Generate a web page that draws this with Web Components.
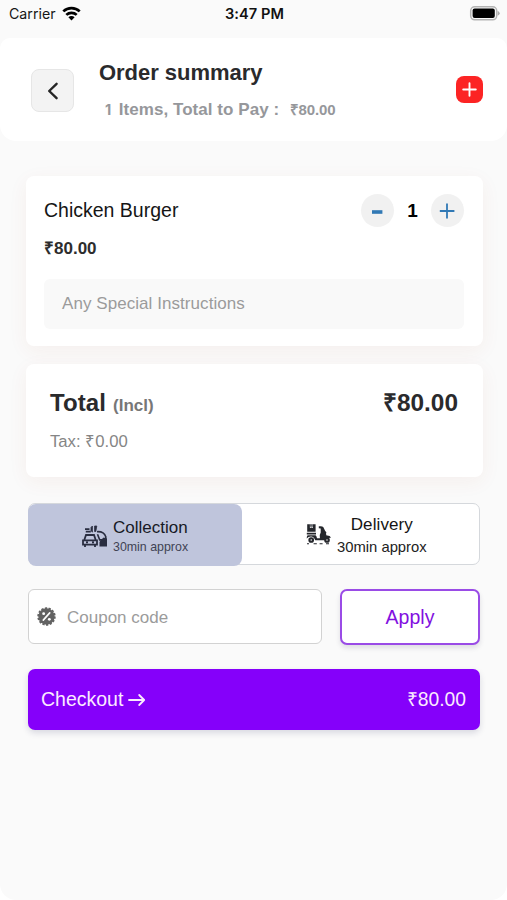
<!DOCTYPE html>
<html lang="en">
<head>
<meta charset="utf-8">
<title>Order summary</title>
<style>
html,body{margin:0;background:#fff}
body{font-family:"Liberation Sans",Arial,sans-serif;color:#2b2b2d}
</style>
</head>
<body>
<order-screen></order-screen>
<script>
function define(name, css, html) {
  const t = document.createElement('template');
  t.innerHTML = '<style>*{box-sizing:border-box}' + css + '</style>' + html;
  customElements.define(name, class extends HTMLElement {
    constructor() {
      super();
      this.attachShadow({mode: 'open'}).append(t.content.cloneNode(true));
    }
  });
}

define('status-bar', `
:host{display:grid;grid-template-columns:1fr auto 1fr;align-items:center;height:38px;padding:0 7px 11px 9px;color:#161616;font-family:Inter,sans-serif}
.c{display:flex;align-items:center;gap:6px;font-size:14.2px}
.c svg{margin-top:-1px}
.t{font-weight:600;font-size:14.6px;letter-spacing:.05px;color:#111;margin-top:1px}
.b{justify-self:end;display:block}
svg{display:block}`,
`<div class="c"><span>Carrier</span><svg width="19" height="15" viewBox="0 0 19 15" fill="none" stroke="#000" stroke-width="2.7"><path d="M1.3 5.4a11.8 11.8 0 0 1 16.4 0M4.3 8.9a7.5 7.5 0 0 1 10.4 0"/><path d="M9.5 14.4 6.4 11.3a4.4 4.4 0 0 1 6.2 0z" fill="#000" stroke="none"/></svg></div>
<div class="t">3:47 PM</div>
<svg class="b" width="31" height="15" viewBox="0 0 31 15"><rect x="1.7" y=".8" width="26" height="13" rx="4" fill="#fafafa" stroke="#b3b3b3" stroke-width="1.5"/><rect x="3.6" y="2.6" width="22.2" height="9.4" rx="2" fill="#000"/><path d="M28.6 4.8q2.1 1 2.1 2.5t-2.1 2.5z" fill="#aaa"/></svg>`);

define('back-button', `
:host{display:grid;place-items:center;width:43px;height:43px;border:1px solid #e6e6e6;border-radius:8px;background:#f3f3f3}`,
`<svg width="14" height="20" viewBox="0 0 14 20" fill="none" stroke="#252525" stroke-width="2.4" stroke-linecap="round" stroke-linejoin="round"><path d="M10.6 2.8 3.2 10l7.4 7.2"/></svg>`);

define('add-button', `
:host{display:grid;place-items:center;width:27px;height:27px;border-radius:8px;background:#fc2424}`,
`<svg width="15" height="15" viewBox="0 0 15 15" stroke="#fff" stroke-width="1.9" stroke-linecap="round"><path d="M7.5 1.2v12.6M1.2 7.5h12.6"/></svg>`);

define('order-header', `
:host{display:flex;align-items:center;height:103px;padding:0 24.5px 0 31px;background:#fff;border-radius:10px 10px 16px 16px}
back-button{margin-top:2px}
.m{flex:1;margin-left:25px}
.h{font-weight:700;font-size:22px;line-height:26px;color:#2a2a2c;letter-spacing:-.03px}
.s{display:flex;align-items:baseline;font-weight:700;font-size:17px;line-height:20px;margin-top:13px;padding-left:6px;color:#96979b;white-space:pre;padding-top:1px;margin-bottom:-1px}
.n{font-size:14.5px;font-family:Inter,sans-serif;margin-right:7.5px}
.w{letter-spacing:.05px}
.a{font-size:15px;margin-left:10.5px;letter-spacing:-.1px}`,
`<back-button></back-button><div class="m"><div class="h">Order summary</div><div class="s"><span class="n">1</span><span class="w">Items, Total to Pay :</span><span class="a">₹80.00</span></div></div><add-button></add-button>`);

define('qty-stepper', `
:host{display:flex;align-items:center}
.o{display:grid;place-items:center;width:33px;height:33px;border-radius:50%;background:#f1f1f1}
b{width:37px;text-align:center;font:700 19px/33px "Liberation Sans",sans-serif;color:#000}
svg{display:block}`,
`<div class="o"><svg width="17" height="17"><path d="M3 10h10.4" stroke="#3179b5" stroke-width="3.6"/></svg></div><b><slot></slot></b><div class="o"><svg width="17" height="17"><path d="M8 1.5v15M.8 9h14.6" stroke="#3179b5" stroke-width="1.8"/></svg></div>`);

define('surface-card', `
:host{display:block;background:#fff;border-radius:8px;box-shadow:0 5px 20px rgba(170,60,30,.06)}`, `<slot></slot>`);

define('item-card', `
:host{display:block;height:170px;padding:18px 19px 0 18px}
.r{display:flex;justify-content:space-between;align-items:center;height:33px;font-size:19.5px;color:#151515;line-height:33px}
.p{font-weight:700;font-size:17px;line-height:20px;margin-top:12px;color:#2d2d2d}
.i{height:50px;margin-top:20px;padding-left:18px;border-radius:6px;background:#f9f9f9;color:#9b9b9b;font-size:17px;line-height:50px;letter-spacing:.06px}`,
`<div class="r"><span>Chicken Burger</span><qty-stepper>1</qty-stepper></div><div class="p">₹80.00</div><div class="i">Any Special Instructions</div>`);

define('total-card', `
:host{display:block;height:113px;padding:24px 25px 0 24px}
.r{display:flex;justify-content:space-between;font-weight:700;font-size:24px;line-height:30px;color:#2a2a2c}
small{font-size:17px;color:#777;margin-left:7px}
.x{font-size:16.7px;line-height:20px;margin-top:11px;color:#858585}
.t{letter-spacing:.1px}.v{font-size:24.4px}`,
`<div class="r"><div><span class="t">Total</span><small>(Incl)</small></div><span class="v">₹80.00</span></div><div class="x">Tax: ₹0.00</div>`);

define('mode-switch', `
:host{display:flex;height:62px;border:1px solid #d5d8dc;border-radius:7px;background:#fff;color:#151515}
.a,.d{display:flex}
.a{width:214px;height:62px;margin:0 0 0 -1px;background:#bfc5dc;border-radius:8px;padding:13px 0 0 54px;color:#171a25}
.d{flex:1;padding:10px 0 0 64px}
svg{display:block;flex:none}
.a svg{margin:8px 5px 0 0}
.d svg{margin:9px 6px 0 0}
.n{font-size:17px;line-height:21px}
.a .s{font-size:12.4px;line-height:18px;color:#3f4354}
.d .n{text-align:center;letter-spacing:.1px}
.d .s{font-size:14.8px;line-height:24px;color:#222}`,
`<div class="a"><svg width="26" height="24" viewBox="0 0 26 24" fill="none" stroke="#292d40" stroke-width="1.8"><path d="M2.2 15.2 4 10h8l1.8 5.2M1 15.3h14v4.4H1zM3 19.5v2.6M13 19.5v2.6M4 17.4h2M10 17.4h2"/><path d="M3 4.2h4.5M3.8 6.6h5" /><path d="M9 2.4 10.4 1v6.2L9 5.6zM12.6 1h2.2l-1 5.5h-1.2z" fill="#292d40" stroke-width=".8"/><path d="M15 6.7q7-.4 8.8 5v7.8M15.5 9.3l2.2 5.6h2.8" stroke-width="1.6"/><path d="M17.5 17q1.5-2.6 4.2-4.4l3.3 1v8h-7.5z" fill="#292d40" stroke="none"/></svg><div><div class="n">Collection</div><div class="s">30min approx</div></div></div>
<div class="d"><svg width="25" height="24" viewBox="0 0 25 24"><g fill="#25272c"><path d="M1.2 1.2h2.7v3.9l1.5-.7 1.5.7V1.2h2.7v7.6H1.2z"/><path d="M3.9 1.2h3v2.6h-3z" fill="#62646a"/><path d="M.8 9.7h9.2v1.7H.8zM1.6 12.3h8q1.2.8 1.4 2.9h2.9q-.6-3.6.8-5.6V5.6l-1.9-.4V3.3q3.6-.5 4.6.9l1.8 3.7q1.9 1 .8 3l.6 1.6q3.5-.3 4.4 2.3-4.2-.4-5.6 2.5H9.2Q8 13.4 5 13.4q-2.6 0-4.3 2 0-2.2.9-3.1z"/></g><g fill="#fff" stroke="#25272c" stroke-width="2.1"><circle cx="5.2" cy="17" r="1.8"/><circle cx="21" cy="17" r="1.8"/></g><path d="M1 20.8h2M7.6 20.8h3.2M13.6 20.8h3M20 20.8h3" stroke="#25272c" stroke-width="1.1"/></svg><div><div class="n">Delivery</div><div class="s">30min approx</div></div></div>`);

define('coupon-field', `
:host{display:flex;align-items:center;width:294px;height:55px;padding:0 0 0 8px;border:1px solid #d2d2d2;border-radius:6px;background:#fff;font-size:17px;color:#9b9b9b}
svg{margin-right:11px}
span{padding-top:2px}`,
`<svg width="19" height="19" viewBox="0 0 20 20"><circle cx="10" cy="10" r="8.6" fill="#626262"/><circle cx="10" cy="10" r="8.8" fill="none" stroke="#626262" stroke-width="1.8" stroke-dasharray="2.4 1.55"/><path d="m6.6 13.8 6.8-7.6" stroke="#fff" stroke-width="1.7" stroke-linecap="round"/><circle cx="7" cy="7" r="1.5" fill="#fff"/><circle cx="13" cy="13" r="1.5" fill="#fff"/></svg><span>Coupon code</span>`);

define('apply-button', `
:host{display:grid;place-items:center;width:140px;height:56px;border:2px solid #9a4be6;border-radius:7px;background:#fff;box-shadow:0 3px 5px rgba(40,30,70,.13);color:#8210e0;font-size:19.5px}`,
`<span><slot></slot></span>`);

define('checkout-button', `
:host{display:flex;align-items:center;height:61px;padding:0 14px 0 13px;border-radius:7px;background:#8500fa;box-shadow:0 3px 6px rgba(30,30,80,.15);color:#fbeaff;font-size:19.5px}
svg{margin:1px auto 0 5px}.v{font-size:19.3px;margin-top:-2px}`,
`<span>Checkout</span><svg width="18" height="14" viewBox="0 0 18 14" fill="none" stroke="#fbeaff" stroke-width="1.8" stroke-linecap="round" stroke-linejoin="round"><path d="M1 7h15.2M11.2 2 16.2 7l-5 5"/></svg><span class="v">₹80.00</span>`);

define('order-screen', `
:host{display:block;width:507px;height:900px;background:#fafafa;border-radius:0 0 16px 16px;overflow:hidden}
main{display:flex;flex-direction:column;padding:35px 24px 0 26px}
surface-card+surface-card{margin-top:18px}
.f{margin:26px 3px 0 2px;display:flex;flex-direction:column}
.q{display:flex;justify-content:space-between;align-items:flex-start;margin:24px 0}`,
`<status-bar></status-bar><order-header></order-header>
<main><surface-card><item-card></item-card></surface-card><surface-card><total-card></total-card></surface-card>
<div class="f"><mode-switch></mode-switch><div class="q"><coupon-field></coupon-field><apply-button>Apply</apply-button></div><checkout-button></checkout-button></div></main>`);
</script>
</body>
</html>
